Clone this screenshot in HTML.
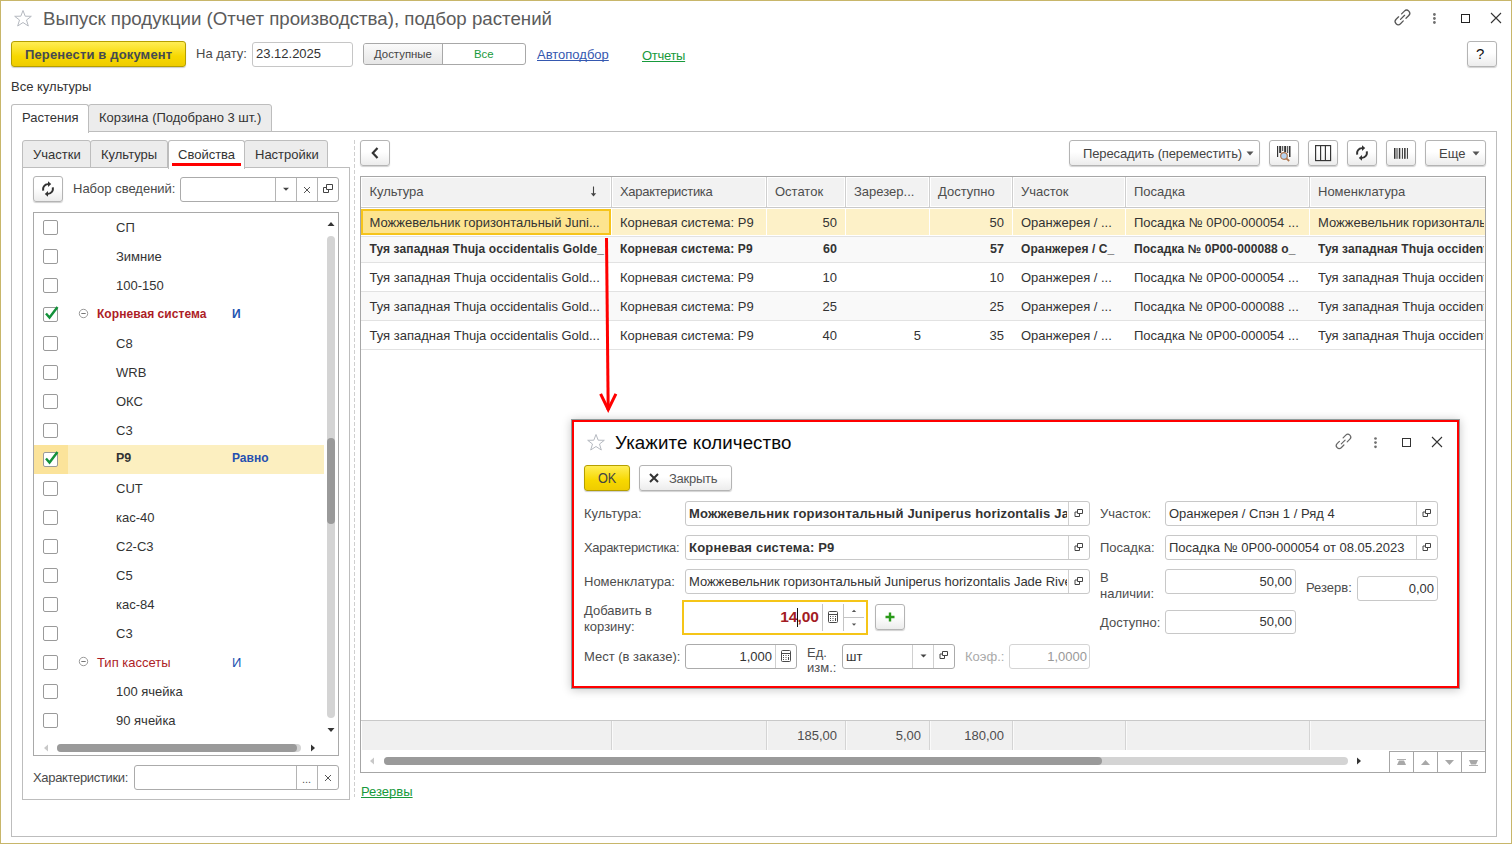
<!DOCTYPE html>
<html><head><meta charset="utf-8">
<style>
*{box-sizing:border-box}
html,body{margin:0;padding:0}
body{width:1512px;height:844px;overflow:hidden;position:relative;background:#fff;font-family:"Liberation Sans",sans-serif;font-size:13px;color:#333}
.a{position:absolute}
.t{position:absolute;white-space:nowrap;line-height:16px;font-size:13px}
.b{font-weight:bold}
.btn{position:absolute;border:1px solid #b4b4b4;border-radius:3px;background:linear-gradient(#fff 0%,#fff 45%,#ececec 100%);box-shadow:0 1px 1px rgba(0,0,0,.18)}
.inp{position:absolute;border:1px solid #c6c6c6;border-radius:3px;background:#fff}
.dv{position:absolute;top:0;bottom:0;width:1px;background:#d0d0d0}
.cb{position:absolute;width:15px;height:15px;border:1px solid #9a9a9a;border-radius:2px;background:#fff}
.hl{position:absolute;height:1px;background:#e2e2e2}
.vl{position:absolute;width:1px;background:#dcdcdc}
</style></head><body>
<!-- window border -->
<div class="a" style="left:0;top:0;width:1512px;height:844px;border:1px solid #c8b66a"></div>

<!-- title -->
<svg class="a" style="left:13px;top:9px" width="20" height="19" viewBox="0 0 20 19"><path d="M10 1.5 L12.2 7.2 L18.3 7.3 L13.5 11 L15.3 17 L10 13.5 L4.7 17 L6.5 11 L1.7 7.3 L7.8 7.2 Z" fill="none" stroke="#b5b9c0" stroke-width="1"/></svg>
<div class="t" style="left:43px;top:8px;font-size:18.7px;line-height:22px;color:#5b5b5b">Выпуск продукции (Отчет производства), подбор растений</div>

<!-- top right icons -->
<svg class="a" style="left:1390px;top:5px" width="24" height="24" viewBox="1390 5 24 24"><g fill="none" stroke="#555" stroke-width="1.25" stroke-linecap="round"><path d="M1401.6 13.9 L1404.4 11.1 A3.1 3.1 0 0 1 1408.8 15.5 L1406.0 18.3"/><path d="M1398.6 16.8 L1396.1 19.3 A3.1 3.1 0 0 0 1400.5 23.7 L1403.3 20.9"/><path d="M1400.5 19.4 L1404.6 15.3"/></g></svg>
<svg class="a" style="left:1430px;top:10px" width="9" height="16" viewBox="1430 10 9 16"><g fill="#707070"><circle cx="1434.4" cy="14.5" r="1.4"/><circle cx="1434.4" cy="18.5" r="1.4"/><circle cx="1434.4" cy="22.5" r="1.4"/></g></svg>
<div class="a" style="left:1461px;top:14px;width:9px;height:9px;border:1.3px solid #222"></div>
<svg class="a" style="left:1490px;top:12px" width="12" height="12" viewBox="0 0 12 12"><path d="M1 1 L11 11 M11 1 L1 11" stroke="#333" stroke-width="1.1"/></svg>

<!-- row 2 -->
<div class="a" style="left:11px;top:41px;width:175px;height:26px;border:1px solid #b59f00;border-radius:3px;background:linear-gradient(#ffed55,#f7d800 60%,#efcc00);box-shadow:0 1px 1px rgba(0,0,0,.2)"></div>
<div class="t b" style="left:25px;top:47px;color:#454a52;letter-spacing:0.15px">Перенести в документ</div>
<div class="t" style="left:196px;top:46px;color:#4a4a4a">На дату:</div>
<div class="inp" style="left:252px;top:42px;width:101px;height:25px"></div>
<div class="t" style="left:256px;top:46px;color:#333">23.12.2025</div>
<div class="a" style="left:363px;top:43px;width:163px;height:22px;border:1px solid #a8a8a8;border-radius:3px;background:#fff;overflow:hidden">
  <div class="a" style="left:0;top:0;width:79px;height:20px;background:linear-gradient(#fafafa,#e6e6e6);border-right:1px solid #a8a8a8"></div>
</div>
<div class="t" style="left:374px;top:46px;font-size:11.4px;color:#444">Доступные</div>
<div class="t" style="left:474px;top:46px;font-size:11.4px;color:#179a3c">Все</div>
<div class="t" style="left:537px;top:47px;color:#3558b0;text-decoration:underline;text-decoration-skip-ink:none">Автоподбор</div>
<div class="t" style="left:642px;top:48px;color:#179a3c;text-decoration:underline;text-decoration-skip-ink:none;letter-spacing:-0.3px">Отчеты</div>
<div class="btn" style="left:1467px;top:41px;width:30px;height:26px"></div>
<div class="t" style="left:1476px;top:46px;font-size:15px;color:#111">?</div>

<div class="t" style="left:11px;top:79px;color:#333">Все культуры</div>

<!-- outer tabs -->
<div class="a" style="left:11px;top:131px;width:1486px;height:706px;border:1px solid #bdbdbd"></div>
<div class="a" style="left:88px;top:104px;width:184px;height:28px;border:1px solid #bdbdbd;border-radius:3px 3px 0 0;background:#ececec"></div>
<div class="a" style="left:11px;top:104px;width:78px;height:29px;border:1px solid #bdbdbd;border-bottom:none;border-radius:3px 3px 0 0;background:#fff"></div>
<div class="t" style="left:22px;top:110px;color:#333">Растения</div>
<div class="t" style="left:99px;top:110px;color:#333">Корзина (Подобрано 3 шт.)</div>

<!-- inner left tabs -->
<div class="a" style="left:22px;top:167px;width:328px;height:633px;border:1px solid #bdbdbd"></div>
<div class="a" style="left:22px;top:140px;width:69px;height:28px;border:1px solid #bdbdbd;border-radius:3px 3px 0 0;background:#ececec"></div>
<div class="a" style="left:90px;top:140px;width:78px;height:28px;border:1px solid #bdbdbd;border-radius:3px 3px 0 0;background:#ececec"></div>
<div class="a" style="left:244px;top:140px;width:84px;height:28px;border:1px solid #bdbdbd;border-radius:3px 3px 0 0;background:#ececec"></div>
<div class="a" style="left:168px;top:140px;width:77px;height:29px;border:1px solid #bdbdbd;border-bottom:none;border-radius:3px 3px 0 0;background:#fff"></div>
<div class="a" style="left:172px;top:163px;width:69px;height:3px;background:#f00"></div>
<div class="t" style="left:33px;top:146.5px">Участки</div>
<div class="t" style="left:101px;top:146.5px">Культуры</div>
<div class="t" style="left:178px;top:146.5px">Свойства</div>
<div class="t" style="left:255px;top:146.5px">Настройки</div>


<div class="btn" style="left:33px;top:176px;width:30px;height:26px"></div>
<svg class="a" style="left:40px;top:181px" width="16" height="16" viewBox="0 0 16 16"><g fill="#333"><path d="M8 2.2 A5.8 5.8 0 0 0 2.5 10 L4.3 9.2 A3.9 3.9 0 0 1 8 4.1 L8 6 L11.2 3.1 L8 0.3 Z"/><path d="M8 13.8 A5.8 5.8 0 0 0 13.5 6 L11.7 6.8 A3.9 3.9 0 0 1 8 11.9 L8 10 L4.8 12.9 L8 15.7 Z"/></g></svg>
<div class="t" style="left:73px;top:181px;color:#4a4a4a">Набор сведений:</div>
<div class="inp" style="left:180px;top:177px;width:159px;height:25px;border-color:#ababab"><div class="dv" style="left:94px;background:#b4b4b4"></div><div class="dv" style="left:115px;background:#b4b4b4"></div><div class="dv" style="left:136px;background:#b4b4b4"></div></div>
<svg class="a" style="left:282px;top:187px" width="8" height="5"><path d="M1 0.8 L7 0.8 L4 3.8 Z" fill="#444"/></svg>
<svg class="a" style="left:302.5px;top:185.5px" width="8" height="8"><path d="M1 1 L7 7 M7 1 L1 7" stroke="#555" stroke-width="1"/></svg>
<svg class="a" style="left:323px;top:184px" width="11" height="11" viewBox="0 0 11 11"><g fill="none" stroke="#444" stroke-width="1"><path d="M3.5 0.5 H9.5 V5.5 H3.5 Z"/><path d="M3.5 3.5 H0.5 V8.5 H5.5 V5.5"/></g></svg>
<div class="a" style="left:33px;top:212px;width:306px;height:544px;border:1px solid #a9a9a9;overflow:hidden">
<div class="cb" style="left:9px;top:6.5px"></div>
<div class="t" style="left:82px;top:6.6px;color:#333">СП</div>
<div class="cb" style="left:9px;top:35.5px"></div>
<div class="t" style="left:82px;top:35.6px;color:#333">Зимние</div>
<div class="cb" style="left:9px;top:64.5px"></div>
<div class="t" style="left:82px;top:64.6px;color:#333">100-150</div>
<div class="cb" style="left:9px;top:93.5px"></div>
<svg class="a" style="left:9px;top:90.5px" width="18" height="18" viewBox="0 0 18 18"><path d="M3 9.5 L6.5 13.5 L14.5 3" fill="none" stroke="#13913a" stroke-width="2.4"/></svg>
<svg class="a" style="left:44px;top:95.0px" width="11" height="11" viewBox="0 0 11 11"><circle cx="5.5" cy="5.5" r="4.2" fill="none" stroke="#9a9a9a" stroke-width="1"/><path d="M3.3 5.5 H7.7" stroke="#777" stroke-width="1"/></svg>
<div class="t" style="left:63px;top:92.6px;color:#ad1d26;font-weight:bold;font-size:12px;letter-spacing:0.05px;">Корневая система</div>
<div class="t" style="left:198px;top:92.6px;color:#2252b0;font-weight:bold;font-size:12px;letter-spacing:0.05px;">И</div>
<div class="cb" style="left:9px;top:122.5px"></div>
<div class="t" style="left:82px;top:122.6px;color:#333">C8</div>
<div class="cb" style="left:9px;top:151.5px"></div>
<div class="t" style="left:82px;top:151.6px;color:#333">WRB</div>
<div class="cb" style="left:9px;top:180.5px"></div>
<div class="t" style="left:82px;top:180.6px;color:#333">ОКС</div>
<div class="cb" style="left:9px;top:209.5px"></div>
<div class="t" style="left:82px;top:209.6px;color:#333">С3</div>
<div class="a" style="left:0;top:232.0px;width:290px;height:29px;background:#fcefc0"></div>
<div class="a" style="left:0;top:232.0px;width:34px;height:29px;background:#fbe39a"></div>
<div class="cb" style="left:9px;top:238.5px"></div>
<svg class="a" style="left:9px;top:235.5px" width="18" height="18" viewBox="0 0 18 18"><path d="M3 9.5 L6.5 13.5 L14.5 3" fill="none" stroke="#13913a" stroke-width="2.4"/></svg>
<div class="t b" style="left:82px;top:236.7px;color:#333;font-size:12.5px">P9</div>
<div class="t b" style="left:198px;top:236.7px;color:#2550b0;font-size:12px">Равно</div>
<div class="cb" style="left:9px;top:267.5px"></div>
<div class="t" style="left:82px;top:267.6px;color:#333">CUT</div>
<div class="cb" style="left:9px;top:296.5px"></div>
<div class="t" style="left:82px;top:296.6px;color:#333">кас-40</div>
<div class="cb" style="left:9px;top:325.5px"></div>
<div class="t" style="left:82px;top:325.6px;color:#333">С2-С3</div>
<div class="cb" style="left:9px;top:354.5px"></div>
<div class="t" style="left:82px;top:354.6px;color:#333">С5</div>
<div class="cb" style="left:9px;top:383.5px"></div>
<div class="t" style="left:82px;top:383.6px;color:#333">кас-84</div>
<div class="cb" style="left:9px;top:412.5px"></div>
<div class="t" style="left:82px;top:412.6px;color:#333">С3</div>
<div class="cb" style="left:9px;top:441.5px"></div>
<svg class="a" style="left:44px;top:443.0px" width="11" height="11" viewBox="0 0 11 11"><circle cx="5.5" cy="5.5" r="4.2" fill="none" stroke="#9a9a9a" stroke-width="1"/><path d="M3.3 5.5 H7.7" stroke="#777" stroke-width="1"/></svg>
<div class="t" style="left:63px;top:441.6px;color:#ad1d26;">Тип кассеты</div>
<div class="t" style="left:198px;top:441.6px;color:#2252b0;">И</div>
<div class="cb" style="left:9px;top:470.5px"></div>
<div class="t" style="left:82px;top:470.6px;color:#333">100 ячейка</div>
<div class="cb" style="left:9px;top:499.5px"></div>
<div class="t" style="left:82px;top:499.6px;color:#333">90 ячейка</div>
</div>
<svg class="a" style="left:327px;top:221px" width="8" height="6"><path d="M0.5 5 L7.5 5 L4 1 Z" fill="#333"/></svg>
<div class="a" style="left:327px;top:236px;width:8px;height:482px;border-radius:4px;background:#d4d4d4"></div>
<div class="a" style="left:327px;top:438px;width:8px;height:86px;border-radius:4px;background:#9a9a9a"></div>
<svg class="a" style="left:327px;top:727px" width="8" height="6"><path d="M0.5 1 L7.5 1 L4 5 Z" fill="#333"/></svg>
<svg class="a" style="left:43px;top:744px" width="6" height="8"><path d="M5 0.5 L5 7.5 L1 4 Z" fill="#c8c8c8"/></svg>
<div class="a" style="left:57px;top:744px;width:244px;height:8px;border-radius:4px;background:#d4d4d4"></div>
<div class="a" style="left:57px;top:744px;width:240px;height:8px;border-radius:4px;background:#9a9a9a"></div>
<svg class="a" style="left:310px;top:744px" width="6" height="8"><path d="M1 0.5 L1 7.5 L5 4 Z" fill="#333"/></svg>
<div class="t" style="left:33px;top:770px;color:#4a4a4a;letter-spacing:-0.33px">Характеристики:</div>
<div class="inp" style="left:134px;top:765px;width:205px;height:25px;border-color:#ababab"><div class="dv" style="left:161px;background:#b4b4b4"></div><div class="dv" style="left:182px;background:#b4b4b4"></div></div>
<div class="t" style="left:302px;top:771px;color:#555;font-size:11px">...</div>
<svg class="a" style="left:323.5px;top:773.5px" width="8" height="8"><path d="M1 1 L7 7 M7 1 L1 7" stroke="#555" stroke-width="1"/></svg>
<div class="a" style="left:354px;top:140px;width:1px;height:657px;background:repeating-linear-gradient(#cfcfcf 0 4px,transparent 4px 6px)"></div>
<div id="rp"></div>
<div class="btn" style="left:360px;top:140px;width:30px;height:26px"></div>
<svg class="a" style="left:370px;top:146px" width="10" height="14" viewBox="0 0 10 14"><path d="M7.5 2 L2.8 7 L7.5 12" fill="none" stroke="#333" stroke-width="2.2"/></svg>
<div class="btn" style="left:1069px;top:140px;width:191px;height:26px"></div>
<div class="t" style="left:1083px;top:146px;color:#444;letter-spacing:-0.12px">Пересадить (переместить)</div>
<svg class="a" style="left:1246px;top:151px" width="8" height="5"><path d="M0.5 0.5 L7.5 0.5 L4 4.5 Z" fill="#555"/></svg>
<div class="btn" style="left:1269px;top:140px;width:30px;height:26px"></div>
<div class="btn" style="left:1308px;top:140px;width:30px;height:26px"></div>
<div class="btn" style="left:1347px;top:140px;width:30px;height:26px"></div>
<div class="btn" style="left:1386px;top:140px;width:30px;height:26px"></div>
<svg class="a" style="left:1276px;top:145px" width="16" height="17" viewBox="0 0 16 17"><g fill="#333"><rect x="1" y="1" width="1.2" height="11"/><rect x="3.2" y="1" width="2" height="7"/><rect x="6.2" y="1" width="1" height="5"/><rect x="8.2" y="1" width="2" height="6"/><rect x="11.2" y="1" width="1" height="7"/><rect x="13" y="1" width="1.5" height="11"/></g><circle cx="8" cy="11" r="3.3" fill="#b8d4f0" stroke="#b07850" stroke-width="1.2"/><path d="M10.3 13.3 L13.2 16" stroke="#b07850" stroke-width="1.8"/></svg>
<svg class="a" style="left:1314px;top:144px" width="18" height="18" viewBox="0 0 18 18"><g fill="none" stroke="#333" stroke-width="1.15"><rect x="1.6" y="1.6" width="15" height="15"/><path d="M6.6 1.6 V16.6 M11.4 1.6 V16.6"/></g></svg>
<svg class="a" style="left:1354px;top:145px" width="16" height="16" viewBox="0 0 16 16"><g fill="#333"><path d="M8 2.2 A5.8 5.8 0 0 0 2.5 10 L4.3 9.2 A3.9 3.9 0 0 1 8 4.1 L8 6 L11.2 3.1 L8 0.3 Z"/><path d="M8 13.8 A5.8 5.8 0 0 0 13.5 6 L11.7 6.8 A3.9 3.9 0 0 1 8 11.9 L8 10 L4.8 12.9 L8 15.7 Z"/></g></svg>
<svg class="a" style="left:1393px;top:147px" width="16" height="13" viewBox="0 0 16 13"><g fill="#333"><rect x="1" y="1" width="1.5" height="10.8"/><rect x="3.5" y="1" width="1" height="10.8"/><rect x="5.8" y="1" width="1.5" height="10.8"/><rect x="8.9" y="1" width="1" height="10.8"/><rect x="11.1" y="1" width="1.5" height="10.8"/><rect x="13.9" y="1" width="1" height="10.8"/></g></svg>
<div class="btn" style="left:1425px;top:140px;width:61px;height:26px"></div>
<div class="t" style="left:1439px;top:146px;color:#444">Еще</div>
<svg class="a" style="left:1472px;top:151px" width="8" height="5"><path d="M0.5 0.5 L7.5 0.5 L4 4.5 Z" fill="#555"/></svg>
<div class="a" style="left:360px;top:176px;width:1126px;height:597px;border:1px solid #a6a6a6"></div>
<div class="a" style="left:361px;top:177px;width:1124px;height:30px;background:#fff"></div>
<div class="a" style="left:361px;top:207px;width:1124px;height:1px;background:#c9c9c9"></div>
<div class="a" style="left:362px;top:178px;width:248px;height:28px;background:#f2f2f2"></div>
<div class="a" style="left:613px;top:178px;width:152px;height:28px;background:#f2f2f2"></div>
<div class="a" style="left:768px;top:178px;width:76px;height:28px;background:#f2f2f2"></div>
<div class="a" style="left:847px;top:178px;width:81px;height:28px;background:#f2f2f2"></div>
<div class="a" style="left:931px;top:178px;width:80px;height:28px;background:#f2f2f2"></div>
<div class="a" style="left:1014px;top:178px;width:110px;height:28px;background:#f2f2f2"></div>
<div class="a" style="left:1127px;top:178px;width:181px;height:28px;background:#f2f2f2"></div>
<div class="a" style="left:1311px;top:178px;width:174px;height:28px;background:#f2f2f2"></div>
<div class="a" style="left:611px;top:177px;width:1px;height:30px;background:#cfcfcf"></div>
<div class="a" style="left:766px;top:177px;width:1px;height:30px;background:#cfcfcf"></div>
<div class="a" style="left:845px;top:177px;width:1px;height:30px;background:#cfcfcf"></div>
<div class="a" style="left:929px;top:177px;width:1px;height:30px;background:#cfcfcf"></div>
<div class="a" style="left:1012px;top:177px;width:1px;height:30px;background:#cfcfcf"></div>
<div class="a" style="left:1125px;top:177px;width:1px;height:30px;background:#cfcfcf"></div>
<div class="a" style="left:1309px;top:177px;width:1px;height:30px;background:#cfcfcf"></div>
<div class="t" style="left:369.5px;top:184px;color:#4d4d4d;">Культура</div>
<div class="t" style="left:620px;top:184px;color:#4d4d4d;letter-spacing:-0.3px;">Характеристика</div>
<div class="t" style="left:775px;top:184px;color:#4d4d4d;">Остаток</div>
<div class="t" style="left:854px;top:184px;color:#4d4d4d;">Зарезер...</div>
<div class="t" style="left:938px;top:184px;color:#4d4d4d;">Доступно</div>
<div class="t" style="left:1021px;top:184px;color:#4d4d4d;">Участок</div>
<div class="t" style="left:1134px;top:184px;color:#4d4d4d;">Посадка</div>
<div class="t" style="left:1318px;top:184px;color:#4d4d4d;">Номенклатура</div>
<svg class="a" style="left:588px;top:184px" width="10" height="14" viewBox="0 0 10 14"><path d="M5.5 2.5 V10.5" stroke="#444" stroke-width="1.1"/><path d="M2.8 9.2 L5.5 12.6 L8.2 9.2 Z" fill="#444"/></svg>
<div class="a" style="left:361px;top:209px;width:1124px;height:26px;background:#fdf1c8"></div>
<div class="a" style="left:611px;top:209px;width:1px;height:26px;background:#fff"></div>
<div class="a" style="left:766px;top:209px;width:1px;height:26px;background:#fff"></div>
<div class="a" style="left:845px;top:209px;width:1px;height:26px;background:#fff"></div>
<div class="a" style="left:929px;top:209px;width:1px;height:26px;background:#fff"></div>
<div class="a" style="left:1012px;top:209px;width:1px;height:26px;background:#fff"></div>
<div class="a" style="left:1125px;top:209px;width:1px;height:26px;background:#fff"></div>
<div class="a" style="left:1309px;top:209px;width:1px;height:26px;background:#fff"></div>
<div class="a" style="left:361px;top:236px;width:1124px;height:1px;background:#e2e2e2"></div>
<div class="a" style="left:361px;top:209px;width:250px;height:26px;background:#fde48f;border:2px solid #f6c41a"></div>
<div class="t" style="left:369.5px;top:215.2px;color:#333;">Можжевельник горизонтальный Juni...</div>
<div class="t" style="left:620px;top:215.2px;color:#333;">Корневая система: P9</div>
<div class="t" style="left:766px;width:71px;text-align:right;top:215.2px;color:#333;">50</div>
<div class="t" style="left:929px;width:75px;text-align:right;top:215.2px;color:#333;">50</div>
<div class="t" style="left:1021px;top:215.2px;color:#333;">Оранжерея / ...</div>
<div class="t" style="left:1134px;top:215.2px;color:#333;">Посадка № 0P00-000054 ...</div>
<div class="t" style="left:1318px;top:215.2px;color:#333;width:166px;overflow:hidden;">Можжевельник горизонтальный Juniperus</div>
<div class="a" style="left:361px;top:237px;width:1124px;height:25px;background:#f9f9f9"></div>
<div class="a" style="left:361px;top:262px;width:1124px;height:1px;background:#e2e2e2"></div>
<div class="t" style="left:369.5px;top:241.2px;color:#333;font-weight:bold;font-size:12px;letter-spacing:0.1px;">Туя западная Thuja occidentalis Golde_</div>
<div class="t" style="left:620px;top:241.2px;color:#333;font-weight:bold;font-size:12px;letter-spacing:0.1px;">Корневая система: P9</div>
<div class="t" style="left:766px;width:71px;text-align:right;top:241.2px;color:#333;font-weight:bold;font-size:12.5px;">60</div>
<div class="t" style="left:929px;width:75px;text-align:right;top:241.2px;color:#333;font-weight:bold;font-size:12.5px;">57</div>
<div class="t" style="left:1021px;top:241.2px;color:#333;font-weight:bold;font-size:12px;letter-spacing:0.1px;">Оранжерея / С_</div>
<div class="t" style="left:1134px;top:241.2px;color:#333;font-weight:bold;font-size:12px;letter-spacing:0.1px;">Посадка № 0P00-000088 о_</div>
<div class="t" style="left:1318px;top:241.2px;color:#333;font-weight:bold;font-size:12px;letter-spacing:0.1px;width:166px;overflow:hidden;">Туя западная Thuja occidentalis Golden</div>
<div class="a" style="left:361px;top:263px;width:1124px;height:28px;background:#fff"></div>
<div class="a" style="left:361px;top:291px;width:1124px;height:1px;background:#e2e2e2"></div>
<div class="t" style="left:369.5px;top:270.2px;color:#333;">Туя западная Thuja occidentalis Gold...</div>
<div class="t" style="left:620px;top:270.2px;color:#333;">Корневая система: P9</div>
<div class="t" style="left:766px;width:71px;text-align:right;top:270.2px;color:#333;">10</div>
<div class="t" style="left:929px;width:75px;text-align:right;top:270.2px;color:#333;">10</div>
<div class="t" style="left:1021px;top:270.2px;color:#333;">Оранжерея / ...</div>
<div class="t" style="left:1134px;top:270.2px;color:#333;">Посадка № 0P00-000054 ...</div>
<div class="t" style="left:1318px;top:270.2px;color:#333;width:166px;overflow:hidden;">Туя западная Thuja occidentalis Golden</div>
<div class="a" style="left:361px;top:292px;width:1124px;height:28px;background:#f9f9f9"></div>
<div class="a" style="left:361px;top:320px;width:1124px;height:1px;background:#e2e2e2"></div>
<div class="t" style="left:369.5px;top:299.2px;color:#333;">Туя западная Thuja occidentalis Gold...</div>
<div class="t" style="left:620px;top:299.2px;color:#333;">Корневая система: P9</div>
<div class="t" style="left:766px;width:71px;text-align:right;top:299.2px;color:#333;">25</div>
<div class="t" style="left:929px;width:75px;text-align:right;top:299.2px;color:#333;">25</div>
<div class="t" style="left:1021px;top:299.2px;color:#333;">Оранжерея / ...</div>
<div class="t" style="left:1134px;top:299.2px;color:#333;">Посадка № 0P00-000088 ...</div>
<div class="t" style="left:1318px;top:299.2px;color:#333;width:166px;overflow:hidden;">Туя западная Thuja occidentalis Golden</div>
<div class="a" style="left:361px;top:321px;width:1124px;height:28px;background:#fff"></div>
<div class="a" style="left:361px;top:349px;width:1124px;height:1px;background:#e2e2e2"></div>
<div class="t" style="left:369.5px;top:328.2px;color:#333;">Туя западная Thuja occidentalis Gold...</div>
<div class="t" style="left:620px;top:328.2px;color:#333;">Корневая система: P9</div>
<div class="t" style="left:766px;width:71px;text-align:right;top:328.2px;color:#333;">40</div>
<div class="t" style="left:845px;width:76px;text-align:right;top:328.2px;color:#333;">5</div>
<div class="t" style="left:929px;width:75px;text-align:right;top:328.2px;color:#333;">35</div>
<div class="t" style="left:1021px;top:328.2px;color:#333;">Оранжерея / ...</div>
<div class="t" style="left:1134px;top:328.2px;color:#333;">Посадка № 0P00-000054 ...</div>
<div class="t" style="left:1318px;top:328.2px;color:#333;width:166px;overflow:hidden;">Туя западная Thuja occidentalis Golden</div>
<div class="a" style="left:361px;top:720px;width:1124px;height:1px;background:#c9c9c9"></div>
<div class="a" style="left:362px;top:721px;width:1123px;height:29px;background:#f0f0f0"></div>
<div class="a" style="left:611px;top:721px;width:1px;height:29px;background:#d4d4d4"></div>
<div class="a" style="left:612px;top:721px;width:1px;height:29px;background:#fafafa"></div>
<div class="a" style="left:766px;top:721px;width:1px;height:29px;background:#d4d4d4"></div>
<div class="a" style="left:767px;top:721px;width:1px;height:29px;background:#fafafa"></div>
<div class="a" style="left:845px;top:721px;width:1px;height:29px;background:#d4d4d4"></div>
<div class="a" style="left:846px;top:721px;width:1px;height:29px;background:#fafafa"></div>
<div class="a" style="left:929px;top:721px;width:1px;height:29px;background:#d4d4d4"></div>
<div class="a" style="left:930px;top:721px;width:1px;height:29px;background:#fafafa"></div>
<div class="a" style="left:1012px;top:721px;width:1px;height:29px;background:#d4d4d4"></div>
<div class="a" style="left:1013px;top:721px;width:1px;height:29px;background:#fafafa"></div>
<div class="a" style="left:1125px;top:721px;width:1px;height:29px;background:#d4d4d4"></div>
<div class="a" style="left:1126px;top:721px;width:1px;height:29px;background:#fafafa"></div>
<div class="a" style="left:1309px;top:721px;width:1px;height:29px;background:#d4d4d4"></div>
<div class="a" style="left:1310px;top:721px;width:1px;height:29px;background:#fafafa"></div>
<div class="t" style="left:766px;width:71px;text-align:right;top:728px;color:#4d4d4d">185,00</div>
<div class="t" style="left:845px;width:76px;text-align:right;top:728px;color:#4d4d4d">5,00</div>
<div class="t" style="left:929px;width:75px;text-align:right;top:728px;color:#4d4d4d">180,00</div>
<svg class="a" style="left:369px;top:757px" width="6" height="8"><path d="M5 0.5 L5 7.5 L1 4 Z" fill="#c8c8c8"/></svg>
<div class="a" style="left:384px;top:757px;width:964px;height:8px;border-radius:4px;background:#d4d4d4"></div>
<div class="a" style="left:384px;top:757px;width:718px;height:8px;border-radius:4px;background:#9a9a9a"></div>
<svg class="a" style="left:1356px;top:757px" width="6" height="8"><path d="M1 0.5 L1 7.5 L5 4 Z" fill="#333"/></svg>
<div class="a" style="left:1389px;top:751px;width:97px;height:22px;border:1px solid #a6a6a6;background:#fff"></div>
<div class="a" style="left:1413px;top:752px;width:1px;height:20px;background:#a6a6a6"></div>
<div class="a" style="left:1437px;top:752px;width:1px;height:20px;background:#a6a6a6"></div>
<div class="a" style="left:1461px;top:752px;width:1px;height:20px;background:#a6a6a6"></div>
<svg class="a" style="left:1390px;top:752px" width="95" height="20" viewBox="1390 752 95 20"><g fill="#a8a8a8"><rect x="1397" y="759" width="9" height="0.9"/><path d="M1399 760.5 H1404 L1406 765 H1397 Z"/><path d="M1425.5 760 L1430 765 H1421 Z"/><path d="M1445 760 H1454 L1449.5 765 Z"/><path d="M1469 760 H1478 L1476 764.5 H1471 Z"/><rect x="1469" y="765" width="9" height="0.9"/></g></svg>
<div class="t" style="left:361px;top:784px;color:#179a3c;text-decoration:underline;text-decoration-skip-ink:none">Резервы</div>
<svg class="a" style="left:590px;top:230px" width="40" height="190" viewBox="590 230 40 190"><g fill="none" stroke="#f00" stroke-width="3"><path d="M606.5 238 L608.2 410"/><path d="M600.6 393.8 L608.2 409.5 L615.9 393.8" stroke-linejoin="miter"/></g></svg>
<div class="a" style="left:571px;top:419px;width:889px;height:270px;background:#fff;border:1px solid #8d9b9b;box-shadow:0 1px 9px rgba(0,0,0,.22)"></div>
<div class="a" style="left:572px;top:420px;width:887px;height:268px;border:2px solid #f00"></div>
<svg class="a" style="left:586px;top:433px" width="20" height="19" viewBox="0 0 20 19"><path d="M10 1.5 L12.2 7.2 L18.3 7.3 L13.5 11 L15.3 17 L10 13.5 L4.7 17 L6.5 11 L1.7 7.3 L7.8 7.2 Z" fill="none" stroke="#b5b9c0" stroke-width="1"/></svg>
<div class="t" style="left:615px;top:432px;font-size:18.7px;line-height:22px;color:#080808;letter-spacing:0.1px">Укажите количество</div>
<svg class="a" style="left:1332px;top:431px" width="22" height="22" viewBox="1332 431 22 22"><g fill="none" stroke="#666" stroke-width="1.2" stroke-linecap="round"><path d="M1343.1 437.8 L1345.8 435.1 A2.9 2.9 0 0 1 1349.9 439.2 L1347.2 441.9"/><path d="M1339.4 441.3 L1337.1 443.6 A2.9 2.9 0 0 0 1341.2 447.7 L1343.9 445"/><path d="M1341.3 443.9 L1345.1 440.1"/></g></svg>
<svg class="a" style="left:1372px;top:434px" width="7" height="16" viewBox="1372 434 7 16"><g fill="#707070"><circle cx="1375.5" cy="438.5" r="1.35"/><circle cx="1375.5" cy="442.6" r="1.35"/><circle cx="1375.5" cy="446.8" r="1.35"/></g></svg>
<div class="a" style="left:1402px;top:438px;width:9px;height:9px;border:1.2px solid #333"></div>
<svg class="a" style="left:1431px;top:436px" width="12" height="12" viewBox="0 0 12 12"><path d="M1 1 L11 11 M11 1 L1 11" stroke="#333" stroke-width="1.1"/></svg>
<div class="a" style="left:584px;top:465px;width:46px;height:26px;border:1px solid #b59f00;border-radius:3px;background:linear-gradient(#ffed55,#f7d800 60%,#efcc00);box-shadow:0 1px 1px rgba(0,0,0,.2)"></div>
<div class="t" style="left:598px;top:470.5px;color:#444;font-size:13.8px;transform:scaleX(0.92);transform-origin:0 0">OK</div>
<div class="btn" style="left:639px;top:465px;width:93px;height:26px"></div>
<svg class="a" style="left:648px;top:472px" width="12" height="12" viewBox="0 0 12 12"><path d="M2 2 L10 10 M10 2 L2 10" stroke="#333" stroke-width="2"/></svg>
<div class="t" style="left:669px;top:470.5px;color:#555;letter-spacing:-0.25px">Закрыть</div>
<div class="t" style="left:584px;top:505.5px;color:#4d4d4d;">Культура:</div>
<div class="inp" style="left:685px;top:501px;width:405px;height:25px;border:1px solid #c8c8c8"><div class="dv" style="left:382px;background:#d0d0d0"></div></div>
<svg class="a" style="left:1073px;top:508px" width="11" height="11" viewBox="0 0 11 11"><g fill="none" stroke="#444" stroke-width="1"><path d="M4.5 1.5 H9.5 V5.5 H4.5 Z"/><path d="M4.5 4 H2 V8.5 H6.5 V5.5"/></g></svg>
<div class="a" style="left:686px;top:503px;width:381px;height:22px;overflow:hidden"><div class="t b" style="left:3px;top:3px;color:#333;letter-spacing:0.2px">Можжевельник горизонтальный Juniperus horizontalis Jade River</div></div>
<div class="t" style="left:584px;top:539.5px;color:#4d4d4d;letter-spacing:-0.33px">Характеристика:</div>
<div class="inp" style="left:685px;top:535px;width:405px;height:25px;border:1px solid #c8c8c8"><div class="dv" style="left:382px;background:#d0d0d0"></div></div>
<svg class="a" style="left:1073px;top:542px" width="11" height="11" viewBox="0 0 11 11"><g fill="none" stroke="#444" stroke-width="1"><path d="M4.5 1.5 H9.5 V5.5 H4.5 Z"/><path d="M4.5 4 H2 V8.5 H6.5 V5.5"/></g></svg>
<div class="t b" style="left:689px;top:539.5px;color:#333;letter-spacing:0.2px">Корневая система: P9</div>
<div class="t" style="left:584px;top:573.5px;color:#4d4d4d;">Номенклатура:</div>
<div class="inp" style="left:685px;top:569px;width:405px;height:25px;border:1px solid #c8c8c8"><div class="dv" style="left:382px;background:#d0d0d0"></div></div>
<svg class="a" style="left:1073px;top:576px" width="11" height="11" viewBox="0 0 11 11"><g fill="none" stroke="#444" stroke-width="1"><path d="M4.5 1.5 H9.5 V5.5 H4.5 Z"/><path d="M4.5 4 H2 V8.5 H6.5 V5.5"/></g></svg>
<div class="a" style="left:686px;top:571px;width:381px;height:22px;overflow:hidden"><div class="t" style="left:3px;top:2.5px;color:#333">Можжевельник горизонтальный Juniperus horizontalis Jade River</div></div>
<div class="t" style="left:584px;top:603.1px;color:#4d4d4d;">Добавить в</div>
<div class="t" style="left:584px;top:618.5px;color:#4d4d4d;">корзину:</div>
<div class="a" style="left:682px;top:600px;width:186px;height:35px;border:2px solid #f5c518;background:#fff"></div>
<div class="a" style="left:822px;top:604px;width:1px;height:27px;background:#c4c4c4"></div>
<div class="a" style="left:843px;top:604px;width:1px;height:27px;background:#c4c4c4"></div>
<div class="a" style="left:843px;top:617px;width:21px;height:1px;background:#c4c4c4"></div>
<svg class="a" style="left:851px;top:609px" width="6" height="4"><path d="M0.8 3 L5.2 3 L3 0.8 Z" fill="#555"/></svg>
<svg class="a" style="left:851px;top:623px" width="6" height="4"><path d="M0.8 0.5 L5.2 0.5 L3 2.7 Z" fill="#555"/></svg>
<svg class="a" style="left:827.5px;top:610.5px" width="10" height="12" viewBox="0 0 10 12"><g fill="none" stroke="#4a4a4a" stroke-width="1"><rect x="0.5" y="0.5" width="9" height="11" rx="1"/><path d="M0.5 3.5 H9.5"/></g><g fill="#4a4a4a"><rect x="2" y="5" width="1" height="1"/><rect x="4.5" y="5" width="1" height="1"/><rect x="7" y="5" width="1" height="1"/><rect x="2" y="7" width="1" height="1"/><rect x="4.5" y="7" width="1" height="1"/><rect x="7" y="7" width="1" height="3"/><rect x="2" y="9" width="1" height="1"/><rect x="4.5" y="9" width="1" height="1"/></g></svg>
<div class="t b" style="left:700px;width:119px;text-align:right;top:608px;color:#a31c24;font-size:15.5px;line-height:18px">14,00</div>
<div class="a" style="left:797px;top:608px;width:1px;height:19px;background:#111"></div>
<div class="btn" style="left:875px;top:604px;width:30px;height:26px"></div>
<svg class="a" style="left:885px;top:612px" width="10" height="10"><path d="M5 0.5 V9.5 M0.5 5 H9.5" stroke="#2a9a1a" stroke-width="2.4"/></svg>
<div class="t" style="left:584px;top:648.8px;color:#4d4d4d;">Мест (в заказе):</div>
<div class="inp" style="left:685px;top:644px;width:112px;height:25px;border:1px solid #ababab"><div class="dv" style="left:89px;background:#d0d0d0"></div></div>
<svg class="a" style="left:780.5px;top:650px" width="10" height="12" viewBox="0 0 10 12"><g fill="none" stroke="#4a4a4a" stroke-width="1"><rect x="0.5" y="0.5" width="9" height="11" rx="1"/><path d="M0.5 3.5 H9.5"/></g><g fill="#4a4a4a"><rect x="2" y="5" width="1" height="1"/><rect x="4.5" y="5" width="1" height="1"/><rect x="7" y="5" width="1" height="1"/><rect x="2" y="7" width="1" height="1"/><rect x="4.5" y="7" width="1" height="1"/><rect x="7" y="7" width="1" height="3"/><rect x="2" y="9" width="1" height="1"/><rect x="4.5" y="9" width="1" height="1"/></g></svg>
<div class="t" style="left:690px;width:82px;text-align:right;top:649px;color:#333">1,000</div>
<div class="t" style="left:807px;top:644.5px;color:#4d4d4d;">Ед.</div>
<div class="t" style="left:807px;top:660.0px;color:#4d4d4d;">изм.:</div>
<div class="inp" style="left:842px;top:644px;width:113px;height:25px;border:1px solid #ababab"><div class="dv" style="left:69px;background:#d0d0d0"></div><div class="dv" style="left:90px;background:#d0d0d0"></div></div>
<svg class="a" style="left:919.5px;top:654px" width="7" height="4"><path d="M0.5 0.5 L6.5 0.5 L3.5 3.5 Z" fill="#444"/></svg>
<svg class="a" style="left:938px;top:650px" width="11" height="11" viewBox="0 0 11 11"><g fill="none" stroke="#444" stroke-width="1"><path d="M4.5 1.5 H9.5 V5.5 H4.5 Z"/><path d="M4.5 4 H2 V8.5 H6.5 V5.5"/></g></svg>
<div class="t" style="left:846px;top:649px;color:#333">шт</div>
<div class="t" style="left:965px;top:648.5px;color:#4d4d4d;color:#aaa">Коэф.:</div>
<div class="inp" style="left:1009px;top:644px;width:81px;height:25px;border:1px solid #d4d4d4"></div>
<div class="t" style="left:1010px;width:77px;text-align:right;top:649px;color:#999">1,0000</div>
<div class="t" style="left:1100px;top:505.5px;color:#4d4d4d;">Участок:</div>
<div class="inp" style="left:1165px;top:501px;width:273px;height:25px;border:1px solid #c8c8c8"><div class="dv" style="left:250px;background:#d0d0d0"></div></div>
<svg class="a" style="left:1421px;top:508px" width="11" height="11" viewBox="0 0 11 11"><g fill="none" stroke="#444" stroke-width="1"><path d="M4.5 1.5 H9.5 V5.5 H4.5 Z"/><path d="M4.5 4 H2 V8.5 H6.5 V5.5"/></g></svg>
<div class="t" style="left:1169px;top:505.5px;color:#333">Оранжерея / Спэн 1 / Ряд 4</div>
<div class="t" style="left:1100px;top:539.5px;color:#4d4d4d;">Посадка:</div>
<div class="inp" style="left:1165px;top:535px;width:273px;height:25px;border:1px solid #c8c8c8"><div class="dv" style="left:250px;background:#d0d0d0"></div></div>
<svg class="a" style="left:1421px;top:542px" width="11" height="11" viewBox="0 0 11 11"><g fill="none" stroke="#444" stroke-width="1"><path d="M4.5 1.5 H9.5 V5.5 H4.5 Z"/><path d="M4.5 4 H2 V8.5 H6.5 V5.5"/></g></svg>
<div class="t" style="left:1169px;top:539.5px;color:#333">Посадка № 0P00-000054 от 08.05.2023</div>
<div class="t" style="left:1100px;top:570.0px;color:#4d4d4d;">В</div>
<div class="t" style="left:1100px;top:585.5px;color:#4d4d4d;">наличии:</div>
<div class="inp" style="left:1165px;top:569px;width:131px;height:25px;border:1px solid #c8c8c8"></div>
<div class="t" style="left:1166px;width:126px;text-align:right;top:573.5px;color:#333">50,00</div>
<div class="t" style="left:1306px;top:580.2px;color:#4d4d4d;">Резерв:</div>
<div class="inp" style="left:1357px;top:576px;width:81px;height:25px;border:1px solid #c8c8c8"></div>
<div class="t" style="left:1358px;width:76px;text-align:right;top:580.5px;color:#333">0,00</div>
<div class="t" style="left:1100px;top:614.5px;color:#4d4d4d;">Доступно:</div>
<div class="inp" style="left:1165px;top:610px;width:131px;height:24px;border:1px solid #c8c8c8"></div>
<div class="t" style="left:1166px;width:126px;text-align:right;top:613.5px;color:#333">50,00</div>
</body></html>
